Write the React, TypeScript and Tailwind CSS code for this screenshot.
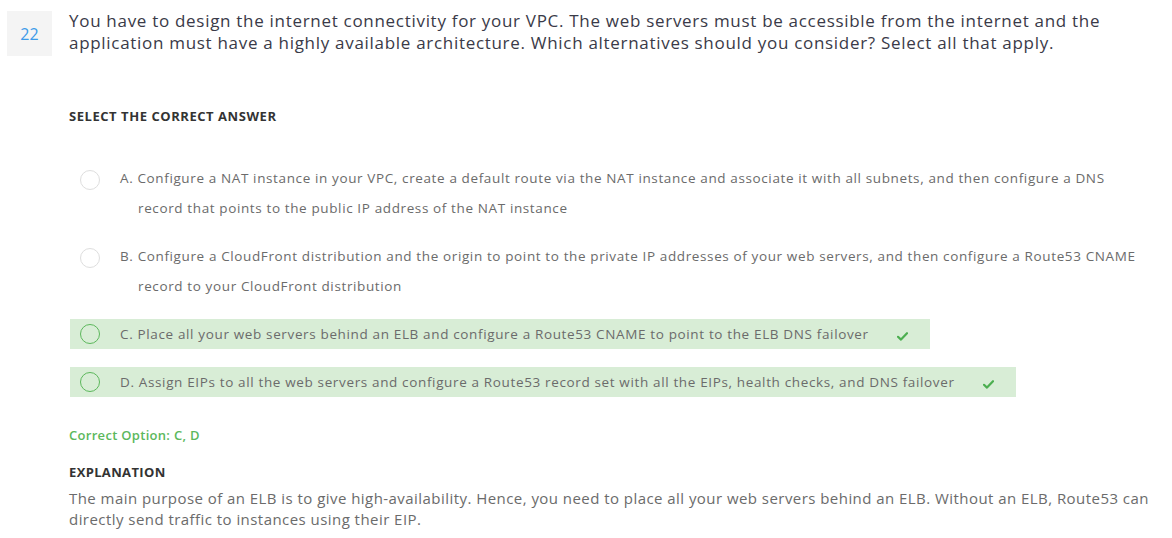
import React from "react";

const Check = () => (
  <svg width="11" height="9" viewBox="0 0 11 9" className="shrink-0">
    <path d="M1 4.8 L4 7.6 L10 1.2" fill="none" stroke="#4caf50" strokeWidth="2.2" strokeLinecap="round" strokeLinejoin="round" />
  </svg>
);

type Opt = { letter: string; lines: string[]; correct?: boolean };

const options: Opt[] = [
  {
    letter: "A.",
    lines: [
      "Configure a NAT instance in your VPC, create a default route via the NAT instance and associate it with all subnets, and then configure a DNS",
      "record that points to the public IP address of the NAT instance",
    ],
  },
  {
    letter: "B.",
    lines: [
      "Configure a CloudFront distribution and the origin to point to the private IP addresses of your web servers, and then configure a Route53 CNAME",
      "record to your CloudFront distribution",
    ],
  },
  {
    letter: "C.",
    lines: ["Place all your web servers behind an ELB and configure a Route53 CNAME to point to the ELB DNS failover"],
    correct: true,
  },
  {
    letter: "D.",
    lines: ["Assign EIPs to all the web servers and configure a Route53 record set with all the EIPs, health checks, and DNS failover"],
    correct: true,
  },
];

export default function App() {
  return (
    <div className="w-[1172px] h-[538px] bg-white overflow-hidden" style={{ fontFamily: '"Open Sans", sans-serif' }}>
      <div className="flex pt-[11px] pl-[7px]">
        <div className="w-[45px] h-[45px] bg-[#f4f4f4] flex items-center justify-center text-[16px] text-[#3d9be9] shrink-0">
          22
        </div>
        <div className="ml-[17px] text-[17px] leading-[22px] tracking-[0.7px] text-[#3a3a48] -mt-[1px] whitespace-nowrap">
          You have to design the internet connectivity for your VPC. The web servers must be accessible from the internet and the
          <br />
          application must have a highly available architecture. Which alternatives should you consider? Select all that apply.
        </div>
      </div>

      <div className="pl-[69px]">
        <div className="mt-[52px] text-[13px] font-bold text-[#333] leading-[16px] tracking-[0.55px]">SELECT THE CORRECT ANSWER</div>

        <div className="mt-[39px] flex flex-col gap-[18px]">
          {options.map((o) =>
            o.correct ? (
              <div key={o.letter} className="self-start flex items-center h-[30px] bg-[#d8edd6] pl-[10px] pr-[22px] ml-[1px]">
                <div className="w-[20px] h-[20px] rounded-full border-[1.5px] border-[#5cb85c] shrink-0" />
                <div className="ml-[20px] text-[13.5px] tracking-[0.64px] text-[#6b6b6b] whitespace-nowrap">
                  {o.letter} {o.lines[0]}
                </div>
                <div className="ml-[28px] mt-[5px]">
                  <Check />
                </div>
              </div>
            ) : (
              <div key={o.letter} className="flex items-start pl-[11px]">
                <div className="w-[20px] h-[20px] rounded-full border border-[#dedede] shrink-0 mt-[7px]" />
                <div className="ml-[20px] text-[13.5px] leading-[30px] tracking-[0.62px] text-[#6b6b6b]">
                  <div className="whitespace-nowrap">
                    {o.letter} {o.lines[0]}
                  </div>
                  <div className="pl-[18px] whitespace-nowrap">{o.lines[1]}</div>
                </div>
              </div>
            )
          )}
        </div>

        <div className="mt-[30px] text-[13px] font-semibold text-[#5cb85c] leading-[16px] tracking-[0.3px]">Correct Option: C, D</div>
        <div className="mt-[21px] text-[13px] font-bold text-[#333] leading-[16px] tracking-[0.35px]">EXPLANATION</div>
        <div className="mt-[8px] text-[15px] leading-[21px] tracking-[0.45px] text-[#6b6b6b] whitespace-nowrap">
          The main purpose of an ELB is to give high-availability. Hence, you need to place all your web servers behind an ELB. Without an ELB, Route53 can
          <br />
          directly send traffic to instances using their EIP.
        </div>
      </div>
    </div>
  );
}
